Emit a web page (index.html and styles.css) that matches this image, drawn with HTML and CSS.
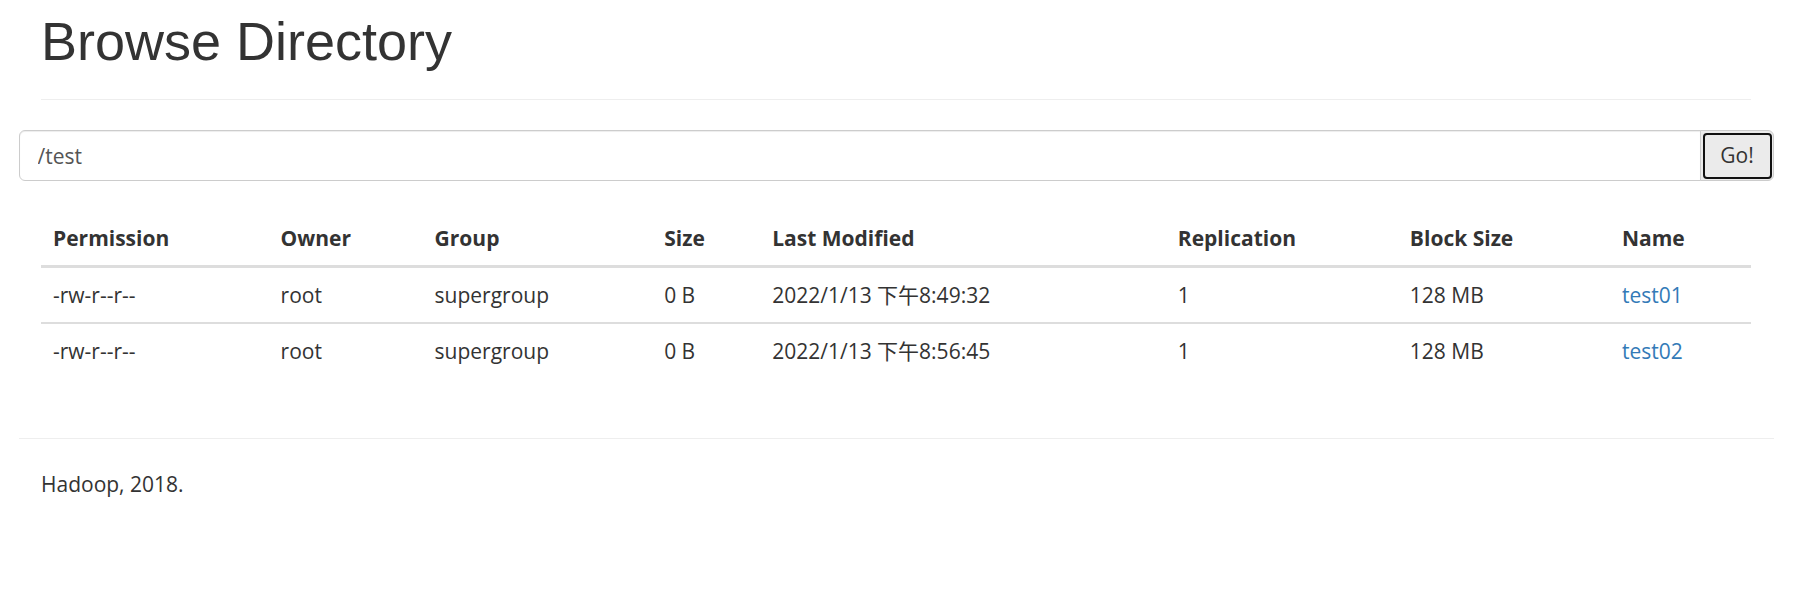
FILE: index.html
```html
<!DOCTYPE html>
<html lang="en">
<head>
<meta charset="utf-8">
<title>Browse Directory</title>
<link rel="stylesheet" href="styles.css">
</head>
<body>
<div class="container">
  <div class="page-header">
    <h1 class="title">Browse Directory</h1>
  </div>
  <form class="input-group">
    <input class="form-control" type="text" value="/test">
    <button class="btn-go" type="button"><span class="btn-ring">Go!</span></button>
  </form>
  <table class="table">
    <colgroup>
      <col class="c-perm"><col class="c-owner"><col class="c-group"><col class="c-size">
      <col class="c-mod"><col class="c-rep"><col class="c-block"><col class="c-name">
    </colgroup>
    <thead>
      <tr>
        <th>Permission</th><th>Owner</th><th>Group</th><th>Size</th>
        <th>Last Modified</th><th>Replication</th><th>Block Size</th><th>Name</th>
      </tr>
    </thead>
    <tbody>
      <tr>
        <td>-rw-r--r--</td><td>root</td><td>supergroup</td><td>0 B</td>
        <td>2022/1/13 下午8:49:32</td><td>1</td><td>128 MB</td><td><a class="file-link" href="#">test01</a></td>
      </tr>
      <tr>
        <td>-rw-r--r--</td><td>root</td><td>supergroup</td><td>0 B</td>
        <td>2022/1/13 下午8:56:45</td><td>1</td><td>128 MB</td><td><a class="file-link" href="#">test02</a></td>
      </tr>
    </tbody>
  </table>
  <div class="footer-row">
    <hr class="footer-rule">
    <p class="footer-text">Hadoop, 2018.</p>
  </div>
</div>
</body>
</html>
```

FILE: styles.css
```css
html, body {
  margin: 0;
  padding: 0;
  background: #fff;
}

body {
  font-family: "Open Sans", "Noto Sans CJK SC", sans-serif;
  font-size: 21px;
  line-height: 30px;
  color: #333;
}

.container {
  width: 1755px;
  margin-left: 18.5px;
  box-sizing: border-box;
}

.page-header {
  margin: 0 22.5px 30px;
  padding: 12px 0 28px;
  border-bottom: 1px solid #eee;
}

.title {
  margin: 0;
  font-family: "Liberation Sans", Arial, sans-serif;
  font-size: 54px;
  font-weight: 400;
  line-height: 59px;
  color: #333;
}

.input-group {
  display: flex;
  height: 51px;
  margin: 0 0 30px;
}

.form-control {
  flex: 1;
  min-width: 0;
  box-sizing: border-box;
  height: 51px;
  margin: 0;
  padding: 9px 18px;
  border: 1px solid #ccc;
  border-radius: 6px 0 0 6px;
  font-family: "Open Sans", sans-serif;
  font-size: 21px;
  color: #555;
  background: #fff;
  box-shadow: inset 0 1px 1px rgba(0, 0, 0, .075);
  outline: none;
}

.btn-go {
  box-sizing: border-box;
  width: 74px;
  height: 51px;
  margin: 0 0 0 -1px;
  padding: 1.5px 1px 1.5px 2px;
  border: 1px solid #ccc;
  border-radius: 0 6px 6px 0;
  background: #ebebeb;
  font-family: "Open Sans", sans-serif;
  font-size: 21px;
  color: #333;
  cursor: pointer;
}

.btn-ring {
  display: flex;
  align-items: center;
  justify-content: center;
  height: 100%;
  box-sizing: border-box;
  border: 2px solid #111;
  border-radius: 4px;
  line-height: 1;
}

.table {
  width: 1710px;
  margin: 0 22.5px 30px;
  border-collapse: collapse;
  table-layout: fixed;
  border-spacing: 0;
}

.c-perm { width: 227.5px; }
.c-owner { width: 154px; }
.c-group { width: 229.5px; }
.c-size { width: 108px; }
.c-mod { width: 405.5px; }
.c-rep { width: 232px; }
.c-block { width: 212px; }
.c-name { width: 141px; }

.table th {
  padding: 12px;
  text-align: left;
  font-weight: 700;
  line-height: 30px;
  vertical-align: bottom;
  border-bottom: 3px solid #ddd;
  white-space: nowrap;
}

.table td {
  padding: 12px;
  line-height: 30px;
  vertical-align: top;
  border-top: 2px solid #ddd;
  white-space: nowrap;
}

.table tbody tr:first-child td {
  border-top: 0;
}

.file-link {
  color: #337ab7;
  text-decoration: none;
}

.footer-row {
  display: flow-root;
}

.footer-rule {
  margin: 30px 0;
  border: 0;
  border-top: 1px solid #eee;
  height: 0;
}

.footer-text {
  margin: 0 22.5px;
}
```
